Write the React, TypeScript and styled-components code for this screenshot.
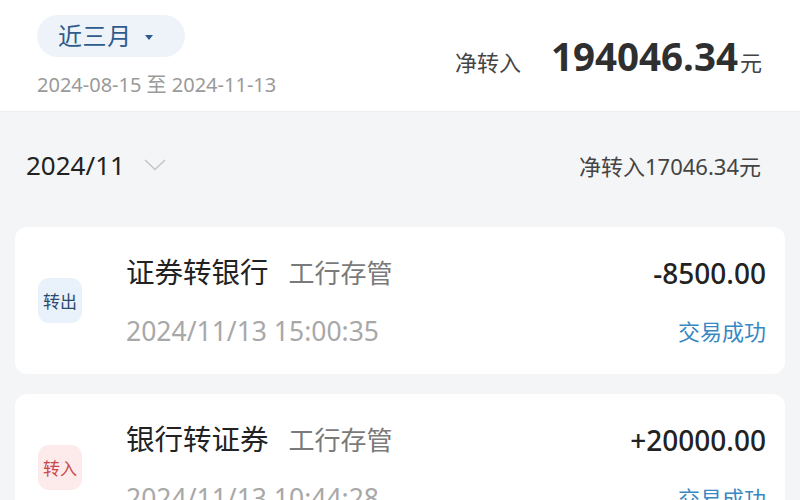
import React from 'react'
import styled, { createGlobalStyle } from 'styled-components'

const GlobalStyle = createGlobalStyle`
  html, body {
    margin: 0;
    padding: 0;
    background: #f4f5f7;
    font-family: "Noto Sans", "Noto Sans CJK SC", sans-serif;
  }
  * { box-sizing: border-box; }
`

const Page = styled.div`
  width: 800px;
  height: 500px;
  overflow: hidden;
  background: #f4f5f7;
`

const Header = styled.header`
  display: flex;
  justify-content: space-between;
  align-items: flex-start;
  background: #fff;
  height: 112px;
  padding: 15px 38px 0 37px;
  border-bottom: 1px solid #eceef1;
`

const LeftCol = styled.div`
  display: flex;
  flex-direction: column;
  align-items: flex-start;
`

const RangePill = styled.button`
  display: flex;
  align-items: center;
  gap: 13px;
  height: 42px;
  padding: 0 32px 0 21px;
  border: 0;
  border-radius: 21px;
  background: #eef3f9;
  color: #2d5c8c;
  font-family: inherit;
  font-size: 24px;
  line-height: 1;
  letter-spacing: 0.6px;
  cursor: pointer;
`

const Caret = styled.span`
  width: 0;
  height: 0;
  border-left: 4px solid transparent;
  border-right: 4px solid transparent;
  border-top: 5px solid #2d5c8c;
  margin-top: 2px;
`

const DateRange = styled.div`
  margin-top: 15px;
  font-size: 20px;
  line-height: 1.3;
  color: #9a9a9a;
`

const NetTotal = styled.div`
  display: flex;
  align-items: baseline;
  margin-top: 16px;
  color: #333;
  line-height: 1.3;
`

const NetLabel = styled.span`
  font-size: 22px;
  color: #444;
  margin-right: 30px;
`

const BigNumber = styled.span`
  font-size: 38.5px;
  font-weight: 700;
  color: #2f2f2f;
`

const Unit = styled.span`
  font-size: 22px;
  margin-left: 2px;
  color: #444;
`

const MonthRow = styled.div`
  display: flex;
  align-items: center;
  justify-content: space-between;
  height: 115px;
  padding: 0 39px 10px 26px;
`

const MonthLabel = styled.div`
  display: flex;
  align-items: center;
  gap: 19px;
  font-size: 26px;
  color: #222;
`

const MonthNet = styled.div`
  font-size: 22px;
  color: #444;
`

const List = styled.div`
  display: flex;
  flex-direction: column;
  gap: 20px;
  padding: 0 15px;
`

const Card = styled.div`
  display: flex;
  align-items: center;
  height: 147px;
  background: #fff;
  border-radius: 12px;
  padding: 0 19px 0 23px;
`

const Badge = styled.div<{ $tone: 'out' | 'in' }>`
  display: flex;
  align-items: center;
  justify-content: center;
  width: 44px;
  height: 45px;
  border-radius: 11px;
  background: ${(p) => (p.$tone === 'out' ? '#e9f1fb' : '#fdeaea')};
  color: ${(p) => (p.$tone === 'out' ? '#2c4b6b' : '#c9474a')};
  font-size: 17px;
  margin-right: 44px;
`

const Body = styled.div`
  flex: 1;
  display: flex;
  flex-direction: column;
  gap: 23px;
  margin-top: 2px;
`

const Line = styled.div`
  display: flex;
  justify-content: space-between;
  align-items: center;
  line-height: 1.3;
`

const Title = styled.div`
  display: flex;
  align-items: baseline;
  gap: 20px;
  font-size: 28.5px;
  color: #222;
`

const Sub = styled.span`
  font-size: 26px;
  color: #7a7a7a;
`

const Amount = styled.div`
  font-size: 28px;
  font-weight: 500;
  color: #222;
`

const Time = styled.div`
  font-size: 26.5px;
  color: #a8a8a8;
`

const Status = styled.div`
  font-size: 22px;
  color: #3a88c2;
`

type Transfer = {
  tone: 'out' | 'in'
  badge: string
  title: string
  bank: string
  amount: string
  time: string
  status: string
}

const transfers: Transfer[] = [
  {
    tone: 'out',
    badge: '转出',
    title: '证券转银行',
    bank: '工行存管',
    amount: '-8500.00',
    time: '2024/11/13 15:00:35',
    status: '交易成功',
  },
  {
    tone: 'in',
    badge: '转入',
    title: '银行转证券',
    bank: '工行存管',
    amount: '+20000.00',
    time: '2024/11/13 10:44:28',
    status: '交易成功',
  },
]

const Chevron = () => (
  <svg width="22" height="12" viewBox="0 0 22 12" fill="none">
    <path d="M1 1l10 9.5L21 1" stroke="#c4c6ca" strokeWidth="1.6" />
  </svg>
)

const TransferCard = ({ item }: { item: Transfer }) => (
  <Card>
    <Badge $tone={item.tone}>{item.badge}</Badge>
    <Body>
      <Line>
        <Title>
          {item.title}
          <Sub>{item.bank}</Sub>
        </Title>
        <Amount>{item.amount}</Amount>
      </Line>
      <Line>
        <Time>{item.time}</Time>
        <Status>{item.status}</Status>
      </Line>
    </Body>
  </Card>
)

const App = () => {
  return (
    <Page>
      <GlobalStyle />
      <Header>
        <LeftCol>
          <RangePill>
            近三月
            <Caret />
          </RangePill>
          <DateRange>2024-08-15 至 2024-11-13</DateRange>
        </LeftCol>
        <NetTotal>
          <NetLabel>净转入</NetLabel>
          <BigNumber>194046.34</BigNumber>
          <Unit>元</Unit>
        </NetTotal>
      </Header>
      <MonthRow>
        <MonthLabel>
          2024/11
          <Chevron />
        </MonthLabel>
        <MonthNet>净转入17046.34元</MonthNet>
      </MonthRow>
      <List>
        {transfers.map((t) => (
          <TransferCard key={t.amount} item={t} />
        ))}
      </List>
    </Page>
  )
}

export default App
